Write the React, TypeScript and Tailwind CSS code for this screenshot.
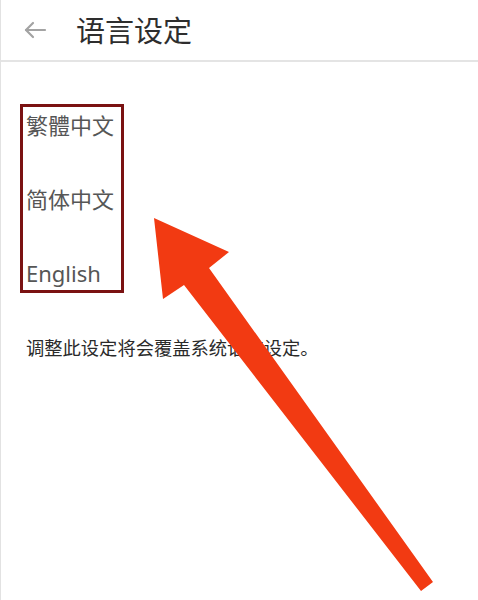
const FONT = '"Noto Sans", "Noto Sans CJK SC", sans-serif';

function BackIcon() {
    return (
        <svg width="24" height="20" viewBox="0 0 24 20" fill="none" stroke="#a3a3a3" strokeWidth="2.2" strokeLinecap="round" strokeLinejoin="round">
            <path d="M22 10H3" />
            <path d="M10 3L3 10l7 7" />
        </svg>
    );
}

// Red annotation arrow drawn over the page
function RedArrow() {
    return (
        <svg className="absolute left-0 top-0 pointer-events-none" width="478" height="600" viewBox="0 0 478 600">
            <polygon
                points="153,218 228,252 208,268 432,582 420,591 183,285 162,299"
                fill="#f23a12"
            />
        </svg>
    );
}

const languages = ["繁體中文", "简体中文", "English"];

export default function App() {
    return (
        <div className="relative h-[600px] w-[478px] overflow-hidden border-l border-[#e2e2e2] bg-white" style={{ fontFamily: FONT }}>
            <header className="flex h-[62px] items-center border-b-2 border-[#e4e4e4] pl-[22px]">
                <BackIcon />
                <h1 className="ml-[29px] text-[29px] leading-none text-[#2e2e2e]">语言设定</h1>
            </header>

            <div className="pl-[19px] pt-[42px]">
                <div className="flex w-[104px] flex-col gap-[40px] border-[3px] border-[#7a1212] pl-[3px] pt-px">
                    {languages.map((lang) => (
                        <div key={lang} className="flex h-[34px] items-center whitespace-nowrap text-[22px] text-[#565656]">
                            {lang}
                        </div>
                    ))}
                </div>
            </div>

            <p className="mt-[43px] pl-[25px] text-[18.3px] leading-[24px] text-[#2a2a2a]">
                调整此设定将会覆盖系统语言设定。
            </p>

            <RedArrow />
        </div>
    );
}
